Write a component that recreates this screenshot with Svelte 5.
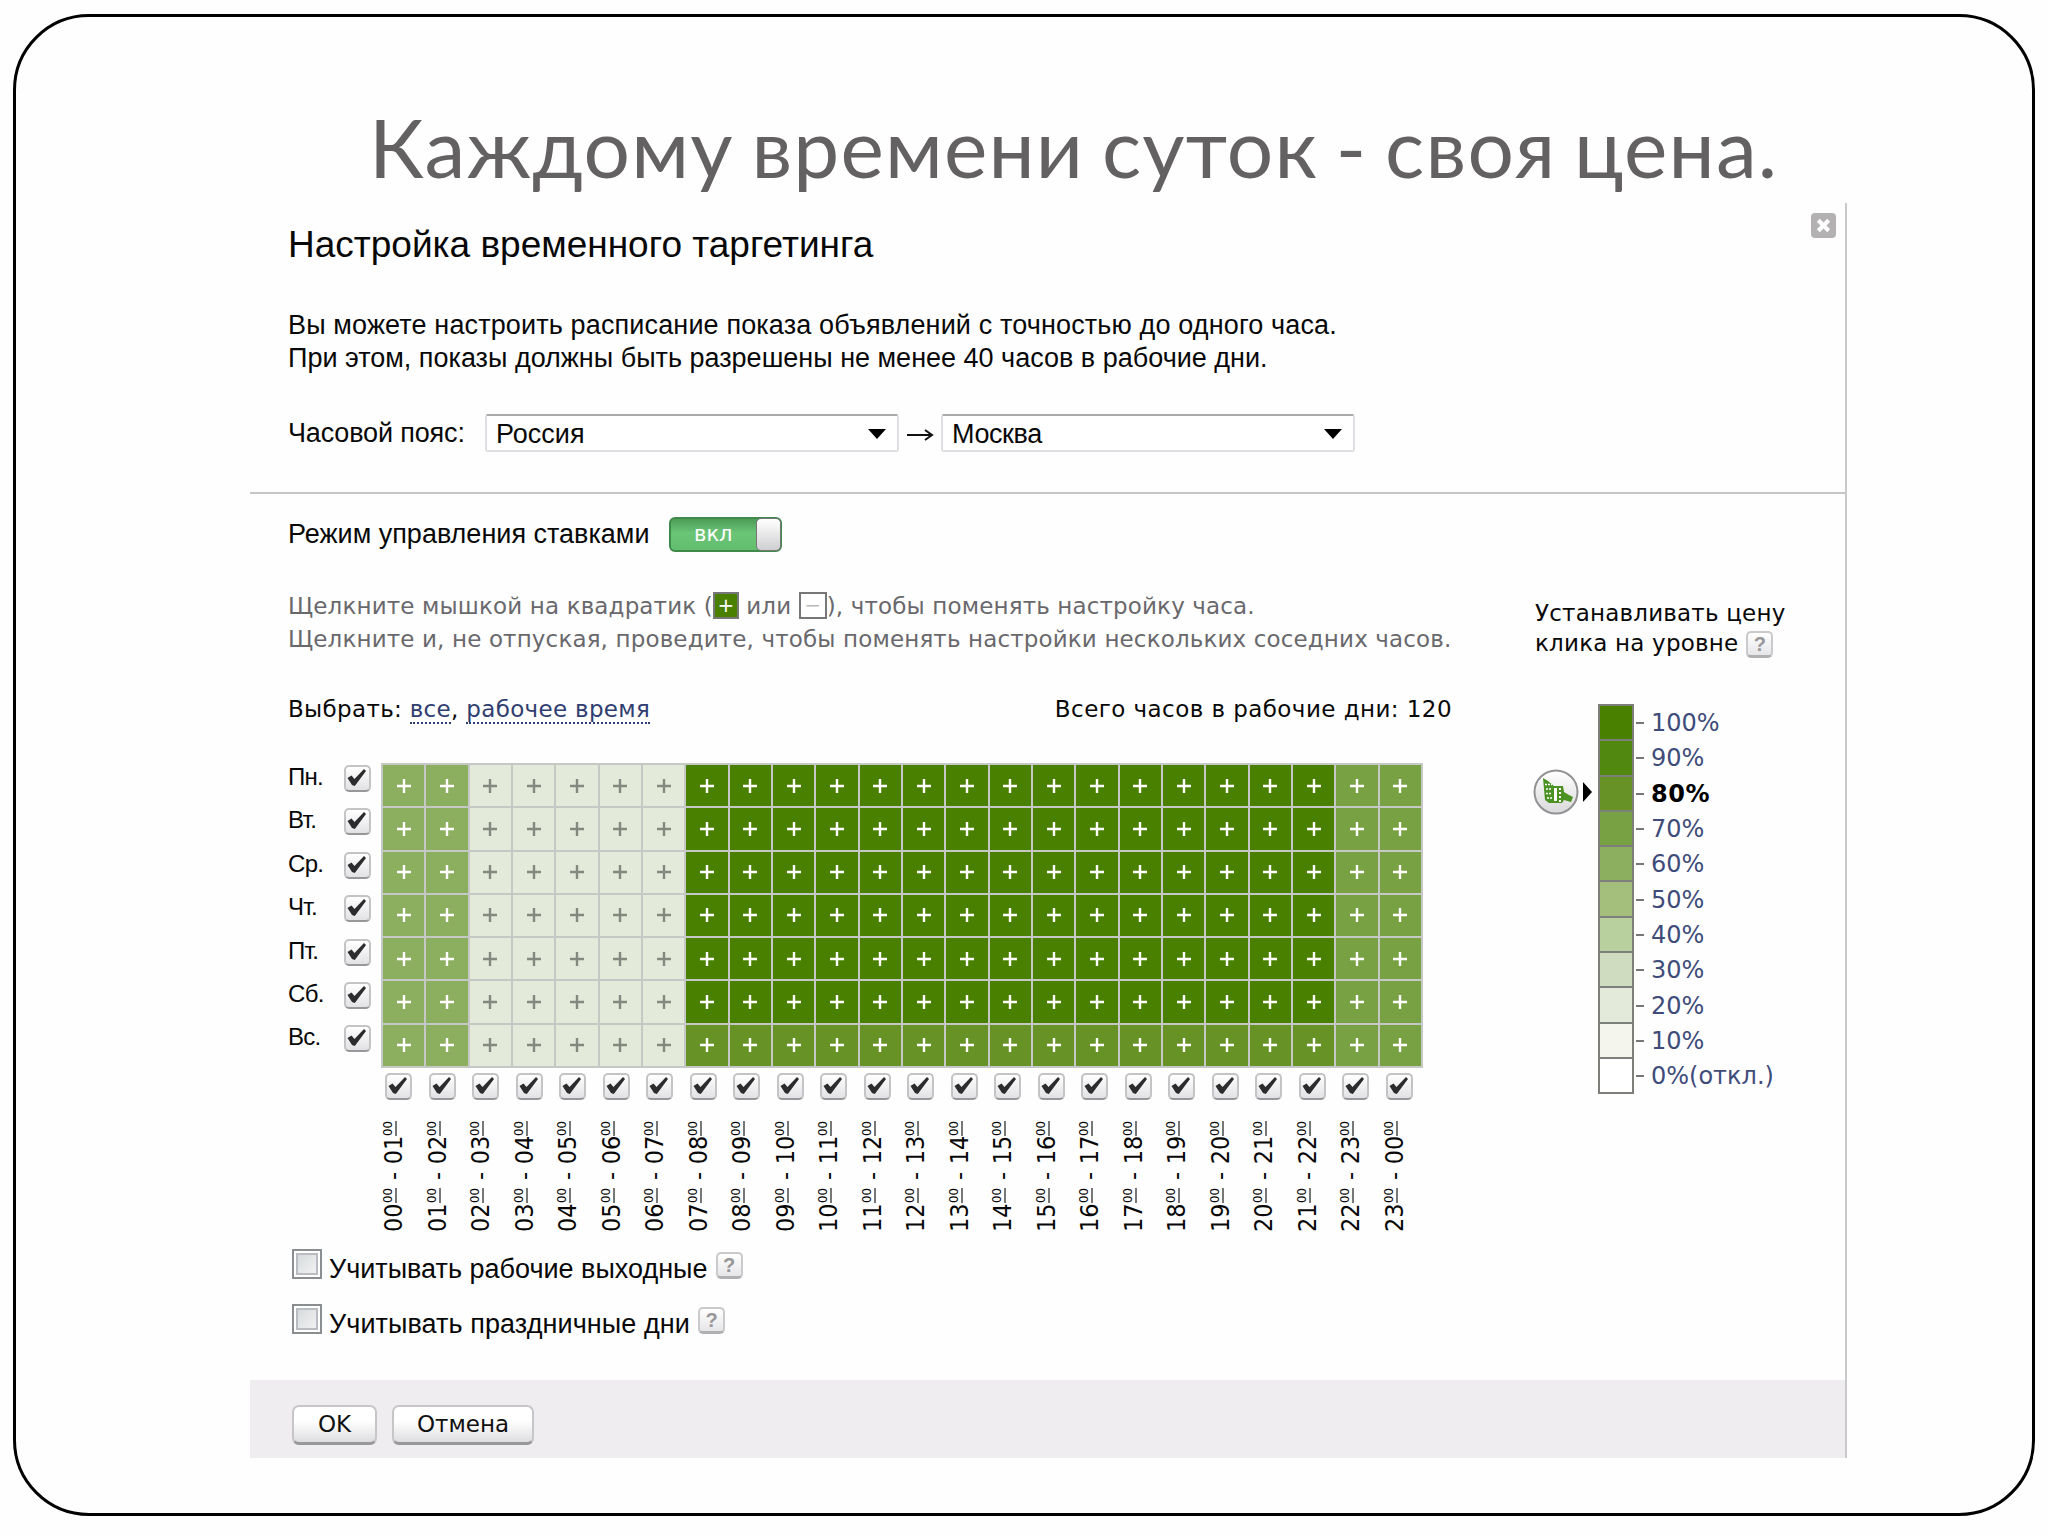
<script lang="ts">
	const days = ['Пн.', 'Вт.', 'Ср.', 'Чт.', 'Пт.', 'Сб.', 'Вс.'];
	const hours = Array.from({ length: 24 }, (_, i) => i);

	const levels = [
		{ value: 100, color: '#4a8000' },
		{ value: 90, color: '#518810' },
		{ value: 80, color: '#679326' },
		{ value: 70, color: '#78a143' },
		{ value: 60, color: '#8cae5f' },
		{ value: 50, color: '#a4bf7c' },
		{ value: 40, color: '#b8cf9e' },
		{ value: 30, color: '#cfdcbf' },
		{ value: 20, color: '#e3eada' },
		{ value: 10, color: '#f4f6ee' },
		{ value: 0, color: '#ffffff' }
	];

	let current = $state(80);

	function levelAt(day: number, hour: number) {
		if (hour < 2) return 60;
		if (hour < 7) return 20;
		if (hour > 21) return 70;
		return day === 6 ? 80 : 100;
	}

	function colorOf(value: number) {
		return levels.find((l) => l.value === value)?.color;
	}

	function pad(n: number) {
		return String(n % 24).padStart(2, '0');
	}
</script>

{#snippet check()}
	<span class="check">
		<svg viewBox="0 0 26 26"><path d="M3.5 13 L7.5 10.5 L10.5 14 L20 4 L22 6 L10.8 21 L8 20 Z" /></svg>
	</span>
{/snippet}

<div class="slide">
	<h1>Каждому времени суток - своя цена.</h1>

	<div class="panel">
		<section class="top">
			<button class="close" aria-label="Закрыть">
				<svg viewBox="0 0 24 24"><path d="M7 7 L17 17 M17 7 L7 17" /></svg>
			</button>
			<h2>Настройка временного таргетинга</h2>
			<p class="intro">
				<span class="intro-1">Вы можете настроить расписание показа объявлений с точностью до одного часа.</span><br />
				<span>При этом, показы должны быть разрешены не менее 40 часов в рабочие дни.</span>
			</p>
			<div class="zone">
				<span class="zone-label">Часовой пояс:</span>
				<div class="select"><span>Россия</span><i></i></div>
				<svg class="to" viewBox="0 0 28 14"><path d="M1 7 H25 M19 2 L26 7 L19 12" /></svg>
				<div class="select"><span class="city">Москва</span><i></i></div>
			</div>
		</section>

		<section class="main">
			<div class="schedule">
				<div class="mode">
					<span>Режим управления ставками</span>
					<div class="toggle"><span>вкл</span><i></i></div>
				</div>

				<p class="hint">
					<span>Щелкните мышкой на квадратик (<b class="box plus">+</b> или <b class="box minus">−</b>), чтобы поменять настройку часа.</span><br />
					<span>Щелкните и, не отпуская, проведите, чтобы поменять настройки нескольких соседних часов.</span>
				</p>

				<div class="pick">
					<span>Выбрать: <a>все</a>, <a>рабочее время</a></span>
					<span class="total">Всего часов в рабочие дни: 120</span>
				</div>

				<div class="week">
					<div class="days">
						{#each days as day}
							<div class="day"><span>{day}</span>{@render check()}</div>
						{/each}
					</div>
					<div class="grid">
						{#each days as _, d}
							{#each hours as h}
								<div class="cell" class:pale={levelAt(d, h) < 50} style="background: {colorOf(levelAt(d, h))}">
									<svg viewBox="0 0 14 14"><path d="M0 7 H14 M7 0 V14" /></svg>
								</div>
							{/each}
						{/each}
					</div>
				</div>

				<div class="hours">
					{#each hours as h}
						<div class="hour">
							{@render check()}
							<div class="range">{pad(h)}<sup>00</sup><em>-</em>{pad(h + 1)}<sup>00</sup></div>
						</div>
					{/each}
				</div>

				<div class="option">
					<span class="square"></span>
					<span class="text">Учитывать рабочие выходные</span>
					<span class="help">?</span>
				</div>
				<div class="option">
					<span class="square"></span>
					<span class="text holidays">Учитывать праздничные дни</span>
					<span class="help">?</span>
				</div>
			</div>

			<aside>
				<div class="price-title">Устанавливать цену</div>
				<div class="price-title second"><span>клика на уровне</span><span class="help">?</span></div>
				<div class="scale">
					{#each levels as level}
						<div class="level" class:active={level.value === current}>
							<div class="pointer">
								{#if level.value === current}
									<svg viewBox="0 0 60 46">
										<defs>
											<linearGradient id="knob" x1="0" y1="0" x2="0" y2="1">
												<stop offset="0" stop-color="#ffffff" />
												<stop offset="1" stop-color="#d9d9db" />
											</linearGradient>
										</defs>
										<circle cx="23" cy="23" r="21.5" fill="url(#knob)" stroke="#929294" stroke-width="2" />
										<path class="hand" d="M10 9 L15 12 L21 17 H30 L31 23 L36 26 L40 28 L38 33 L31 31 L29 34 H16 L12 31 Z" />
										<path class="fingers" d="M12 15.5 H19 M13 20 H19 M13 24.5 H19 M14 29 H19" />
										<path class="cuff" d="M22.5 19 V32" />
										<path class="stitch" d="M27 19 V33" />
										<path d="M50 13 L59 23 L50 33 Z" />
									</svg>
								{/if}
							</div>
							<div class="swatch" style="background: {level.color}"></div>
							<span class="tick"></span>
							<span class="percent">{level.value}%{level.value === 0 ? '(откл.)' : ''}</span>
						</div>
					{/each}
				</div>
			</aside>
		</section>

		<footer>
			<button class="btn">OK</button>
			<button class="btn cancel">Отмена</button>
		</footer>
	</div>
</div>

<style>
	:global(body) {
		background: #fefefe;
	}

	.slide {
		box-sizing: border-box;
		width: 2022px;
		height: 1502px;
		margin: 14px 0 0 13px;
		padding: 72px 0 0 234px;
		border: 3px solid #000;
		border-radius: 76px;
		font-family: "Liberation Sans", sans-serif;
		color: #080808;
	}

	h1, h2, p {
		margin: 0;
		font-weight: 400;
		white-space: nowrap;
	}

	h1 {
		height: 114px;
		padding-left: 119px;
		font: 400 82px/114px Lato, sans-serif;
		letter-spacing: 1.2px;
		word-spacing: -4.5px;
		color: #636162;
	}

	.panel {
		box-sizing: border-box;
		width: 1597px;
		height: 1255px;
		border-right: 2px solid #c9c9cc;
		display: flex;
		flex-direction: column;
	}

	.top {
		position: relative;
		box-sizing: border-box;
		height: 291px;
		padding: 19px 0 0 38px;
		border-bottom: 2px solid #c6c6c9;
	}

	.close {
		position: absolute;
		right: 9px;
		top: 10px;
		width: 25px;
		height: 25px;
		padding: 0;
		border: 0;
		border-radius: 4px;
		background: #b3b1b2;
	}

	.close svg { display: block; }
	.close path { stroke: #fff; stroke-width: 4; }

	h2 {
		font-size: 37px;
		line-height: 45px;
	}

	.intro {
		margin-top: 42px;
		font-size: 27px;
		line-height: 33px;
	}

	.intro-1 { letter-spacing: 0.14px; }

	.zone {
		display: flex;
		align-items: center;
		height: 38px;
		margin-top: 39px;
		font-size: 27px;
	}

	.zone-label {
		width: 197px;
		letter-spacing: -0.15px;
	}

	.city { letter-spacing: -0.4px; }

	.select {
		box-sizing: border-box;
		display: flex;
		align-items: center;
		justify-content: space-between;
		width: 414px;
		height: 38px;
		padding: 2px 11px 0 9px;
		border: 2px solid #dfdfe3;
		border-top-color: #aaaaad;
		border-radius: 3px;
		background: #fff;
	}

	.select i {
		border: 9px solid transparent;
		border-top: 10px solid #000;
		border-bottom: 0;
	}

	.to {
		width: 28px;
		height: 14px;
		margin: 4px 7px 0 7px;
		fill: none;
		stroke: #111;
		stroke-width: 2;
	}

	.main {
		display: flex;
		height: 886px;
		padding-left: 38px;
	}

	.schedule { width: 1247px; }

	.mode {
		display: flex;
		align-items: center;
		height: 36px;
		margin-top: 22px;
		font-size: 27px;
	}

	.mode > span { width: 381px; }

	.toggle {
		position: relative;
		box-sizing: border-box;
		width: 113px;
		height: 35px;
		padding-left: 23px;
		border: 2px solid #3f8a4b;
		border-radius: 6px;
		background: linear-gradient(#4d9c58, #6bc577 45%, #62bd6d);
		font: 21px/31px "DejaVu Sans", sans-serif;
		color: #fff;
	}

	.toggle i {
		position: absolute;
		right: -1px;
		top: -1px;
		width: 23px;
		height: 31px;
		border: 1px solid #777;
		border-radius: 5px;
		background: linear-gradient(#fff, #cfcfd1);
	}

	.hint {
		margin-top: 39px;
		font: 23px/31px "DejaVu Sans", sans-serif;
		letter-spacing: 0.14px;
		color: #69686c;
	}

	.box {
		position: relative;
		top: -5px;
		display: inline-block;
		box-sizing: border-box;
		width: 26px;
		height: 27px;
		border: 2px solid #777679;
		font-size: 20px;
		font-weight: 400;
		line-height: 22px;
		text-align: center;
		letter-spacing: 0;
		vertical-align: -3px;
	}

	.plus { background: #4a8000; color: #fff; }
	.minus { width: 28px; background: #fff; color: #bbb; }

	.pick {
		display: flex;
		justify-content: space-between;
		width: 1164px;
		margin-top: 37px;
		font: 23px/34px "DejaVu Sans", sans-serif;
		letter-spacing: 0.32px;
		white-space: nowrap;
	}

	.total { letter-spacing: 0.44px; }

	.pick a {
		color: #2f3d70;
		border-bottom: 2px dotted #2f3d70;
	}

	.week {
		display: flex;
		margin-top: 37px;
	}

	.days { width: 93px; }

	.day {
		display: flex;
		height: 43.4px;
		font-size: 24px;
		line-height: 28px;
		letter-spacing: -0.7px;
	}

	.day span:first-child { width: 56px; }

	.check {
		box-sizing: border-box;
		flex: none;
		width: 27px;
		height: 27px;
		margin-top: 2px;
		border: 2px solid #c4c3c6;
		border-bottom-color: #98979a;
		border-radius: 5px;
		background: linear-gradient(#fff, #e2e1e4);
	}

	.check svg {
		display: block;
		width: 26px;
		height: 26px;
		margin: -2px;
		fill: #2c2b2d;
	}

	.grid {
		display: grid;
		grid-template-columns: repeat(24, 1fr);
		grid-template-rows: repeat(7, 1fr);
		width: 1040px;
		height: 303px;
		border-left: 2px solid #c5c8c5;
		border-top: 2px solid #c5c8c5;
	}

	.cell {
		display: flex;
		align-items: center;
		justify-content: center;
		border-right: 2px solid #c5c8c5;
		border-bottom: 2px solid #c5c8c5;
	}

	.cell svg {
		width: 14px;
		height: 14px;
		stroke: #fff;
		stroke-width: 2.4;
	}

	.cell.pale svg { stroke: #84897f; }

	.hours {
		display: flex;
		margin: 3px 0 0 97px;
	}

	.hour {
		width: 43.5px;
		height: 166px;
		flex: none;
		display: flex;
		flex-direction: column;
	}

	.range {
		width: 28px;
		height: 111px;
		margin: 21px 0 0 -5px;
		writing-mode: vertical-rl;
		transform: rotate(180deg);
		font: 25px/28px "DejaVu Sans Condensed", "DejaVu Sans", sans-serif;
		white-space: nowrap;
	}

	.range sup {
		font-size: 13px;
		line-height: 1;
		vertical-align: 6px;
		border-left: 2px solid #777;
	}

	.range em {
		font-style: normal;
		margin: 8px 0;
	}

	.option {
		display: flex;
		align-items: center;
		height: 55px;
		padding-left: 4px;
		font-size: 27px;
		white-space: nowrap;
	}

	.option .text { padding-top: 9px; }
	.option .holidays { letter-spacing: 0.08px; }

	.square {
		box-sizing: border-box;
		width: 30px;
		height: 30px;
		margin: -1px 7px 0 0;
		border: 2px solid #8b8e90;
		background: linear-gradient(135deg, #d2d6d9, #f6f6f6);
		box-shadow: inset 0 0 0 2px #fff, inset 0 0 0 4px #b9bdc1;
	}

	.help {
		display: inline-block;
		box-sizing: border-box;
		flex: none;
		width: 27px;
		height: 27px;
		border: 2px solid #cac9cc;
		border-bottom: 3px solid #b0afb2;
		border-radius: 5px;
		background: linear-gradient(#fff, #e6e5e8);
		font: bold 20px/22px "Liberation Sans", sans-serif;
		letter-spacing: 0;
		color: #98979a;
		text-align: center;
	}

	.option .help { margin: 2px 0 0 8px; }

	aside { padding-top: 104px; }

	.price-title {
		height: 31px;
		font: 23px/31px "DejaVu Sans", sans-serif;
		letter-spacing: 0.2px;
		white-space: nowrap;
	}

	.second {
		display: flex;
		align-items: center;
		margin-top: -1px;
	}

	.second .help { margin: 2px 0 0 8px; }

	.scale {
		margin: 45px 0 0 -2px;
		font: 24px/35px "DejaVu Sans", sans-serif;
	}

	.level {
		display: flex;
		align-items: center;
		height: 35.3px;
		color: #3f4c7a;
	}

	.level.active {
		font-weight: 700;
		letter-spacing: 0.6px;
		color: #000;
	}

	.pointer { width: 65px; }

	.pointer svg {
		display: block;
		width: 60px;
		height: 46px;
		margin: -6px 0 -5px;
	}

	.hand { fill: #4b9222; }
	.fingers { stroke: #fff; stroke-width: 1.4; stroke-dasharray: 2 1; }
	.cuff { stroke: #fff; stroke-width: 3; }
	.stitch { stroke: #fff; stroke-width: 2; stroke-dasharray: 2 2; }

	.swatch {
		box-sizing: border-box;
		width: 36px;
		height: 37.3px;
		margin-bottom: -2px;
		border: 2px solid #7c7f7a;
	}

	.tick {
		width: 8px;
		height: 2px;
		margin: 3px 0 0 2px;
		background: #777;
	}

	.percent { margin: 4px 0 0 7px; }

	footer {
		display: flex;
		align-items: flex-start;
		gap: 15px;
		height: 78px;
		box-sizing: border-box;
		padding: 25px 0 0 42px;
		background: #efedf0;
	}

	.btn {
		width: 85px;
		height: 40px;
		padding: 0 0 2px;
		border: 2px solid #c6c5c8;
		border-bottom: 3px solid #98979a;
		border-radius: 7px;
		background: linear-gradient(#fff 40%, #dedde0);
		font: 23px "DejaVu Sans", sans-serif;
		color: #111;
	}

	.cancel { width: 142px; }
</style>
